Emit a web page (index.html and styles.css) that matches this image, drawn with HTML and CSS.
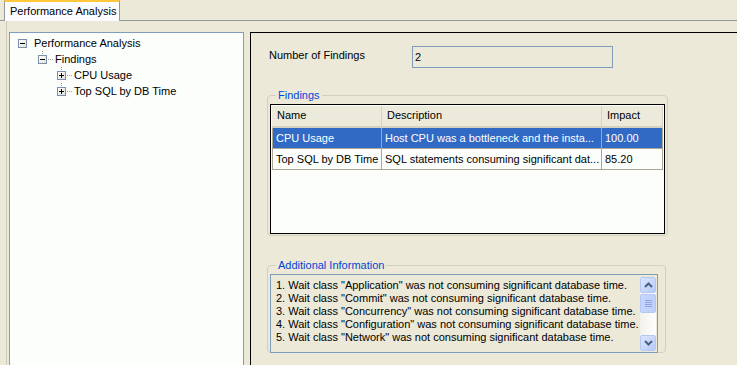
FILE: index.html
```html
<!DOCTYPE html>
<html>
	<head>
		<title>Performance Analysis</title>
		<meta charset="utf-8">
		<link rel="stylesheet" href="styles.css">
	</head>
	<body>
		<div class="tabbar">
			<div class="tab">Performance Analysis</div>
		</div>
		<div class="page">
			<div class="tree">
				<div class="node lvl0"><span class="box minus"></span><span class="label">Performance Analysis</span></div>
				<div class="node lvl1"><span class="box minus"></span><span class="dots"></span><span class="label">Findings</span></div>
				<div class="node lvl2"><span class="box plus"></span><span class="dots"></span><span class="label">CPU Usage</span></div>
				<div class="node lvl2"><span class="box plus"></span><span class="dots"></span><span class="label">Top SQL by DB Time</span></div>
			</div>
			<div class="detail">
				<div class="count">
					<span class="count-label">Number of Findings</span>
					<span class="field">2</span>
				</div>
				<fieldset class="group findings">
					<legend>Findings</legend>
					<div class="grid">
						<div class="row head">
							<div class="cell c-name">Name</div>
							<div class="cell c-desc">Description</div>
							<div class="cell c-imp">Impact</div>
						</div>
						<div class="row selected">
							<div class="cell c-name">CPU Usage</div>
							<div class="cell c-desc">Host CPU was a bottleneck and the insta...</div>
							<div class="cell c-imp">100.00</div>
						</div>
						<div class="row">
							<div class="cell c-name">Top SQL by DB Time</div>
							<div class="cell c-desc">SQL statements consuming significant dat...</div>
							<div class="cell c-imp">85.20</div>
						</div>
					</div>
				</fieldset>
				<fieldset class="group info">
					<legend>Additional Information</legend>
					<div class="textarea">
						<div class="lines">
							<p>1. Wait class "Application" was not consuming significant database time.</p>
							<p>2. Wait class "Commit" was not consuming significant database time.</p>
							<p>3. Wait class "Concurrency" was not consuming significant database time.</p>
							<p>4. Wait class "Configuration" was not consuming significant database time.</p>
							<p>5. Wait class "Network" was not consuming significant database time.</p>
						</div>
						<div class="scrollbar">
							<div class="sbtn"><svg width="9" height="6" viewBox="0 0 9 6"><path d="M1 5 L4.5 1.5 L8 5" fill="none" stroke="#4d6185" stroke-width="2"/></svg></div>
							<div class="thumb"><span></span><span></span><span></span><span></span></div>
							<div class="track"></div>
							<div class="sbtn"><svg width="9" height="6" viewBox="0 0 9 6"><path d="M1 1 L4.5 4.5 L8 1" fill="none" stroke="#4d6185" stroke-width="2"/></svg></div>
						</div>
					</div>
				</fieldset>
			</div>
		</div>
	</body>
</html>
```

FILE: styles.css
```css
*{
	margin:0;
	padding:0;
	box-sizing:border-box;
}
body{
	background-color:#ece9d8;
	font-family:"Liberation Sans", Arial, sans-serif;
	font-size:11px;
	color:#000;
	overflow:hidden;
	height:365px;
}
.tabbar{
	height:21px;
	border-bottom:1px solid #919b9c;
	padding-left:4px;
	display:flex;
}
.tab{
	width:116px;
	height:21px;
	background-color:#fcfcfe;
	border:1px solid #919b9c;
	border-top:2px solid #ffc83c;
	border-bottom:none;
	padding:3px 0 0 5px;
	line-height:13px;
	white-space:nowrap;
}
.page{
	margin-left:6px;
	border-left:1px solid #ccc9b8;
	display:flex;
	padding:11px 0 0 2px;
	gap:6px;
	height:344px;
}
.tree{
	width:235px;
	flex:none;
	background-color:#fcfefc;
	border:1px solid #7f9db9;
	border-bottom:none;
	padding-top:2px;
}
.node{
	height:16px;
	display:flex;
	align-items:center;
	position:relative;
}
.lvl0{padding-left:8px;}
.lvl1{padding-left:28px;}
.lvl2{padding-left:47px;}
.box{
	position:relative;
	width:9px;
	height:9px;
	border:1px solid #7a8fa8;
	background:linear-gradient(135deg,#ffffff 0%,#e2e2d8 100%);
	flex:none;
}
.box::after{
	content:"";
	position:absolute;
	left:1px;
	top:3px;
	width:5px;
	height:1px;
	background-color:#000;
}
.plus::before{
	content:"";
	position:absolute;
	left:3px;
	top:1px;
	width:1px;
	height:5px;
	background-color:#000;
}
.dots{
	width:6px;
	height:1px;
	margin-left:1px;
	margin-right:1px;
	background-image:linear-gradient(90deg,#a0a0a0 50%,transparent 50%);
	background-size:2px 1px;
	flex:none;
}
.lvl0 .label{margin-left:7px;}
.label{
	white-space:nowrap;
}
/* vertical dotted connectors above child expanders */
.lvl1::before, .lvl2::before{
	content:"";
	position:absolute;
	top:0;
	width:1px;
	height:4px;
	background-image:linear-gradient(180deg,#a0a0a0 50%,transparent 50%);
	background-size:1px 2px;
}
.lvl1::before{left:32px;}
.lvl2::before{left:51px;}
.detail{
	flex:1;
	margin-right:-20px;
	border:1px solid #000;
	border-bottom:none;
	padding:13px 0 0 16px;
}
.count{
	display:flex;
	align-items:center;
	height:22px;
}
.count-label{
	width:145px;
	padding-left:2px;
	margin-top:-5px;
}
.field{
	width:201px;
	height:22px;
	border:1px solid #7f9db9;
	padding:4px 0 0 2px;
}
.group{
	width:399px;
	border:1px solid #d0d0bf;
	border-radius:4px;
	padding:0 2px 1px 2px;
}
.group legend{
	color:#0046d5;
	margin-left:6px;
	padding:0 2px;
	line-height:13px;
	font-size:11px;
}
.findings{
	margin-top:21px;
}
.grid{
	border:1px solid #000;
	height:130px;
	background-color:#fcfefc;
	padding:1px;
	margin-top:2px;
}
.row{
	display:flex;
	height:21px;
	border-bottom:1px solid #aca899;
	width:391px;
}
.row .cell{
	border-right:1px solid #aca899;
	padding:0 0 0 3px;
	line-height:20px;
	white-space:nowrap;
	overflow:hidden;
	text-overflow:clip;
}
.row .cell:first-child{border-left:1px solid #aca899;}
.c-name{width:110px;}
.c-desc{width:220px;}
.c-imp{width:61px;}
.head{
	height:22px;
	background-color:#ebeadb;
	border-bottom:2px solid #d6d2c2;
}
.head .cell{
	border-right:1px solid #d6d2c2;
	padding-left:5px;
	line-height:19px;
}
.row.head .cell:first-child{border-left:none;}
.selected{
	background-color:#316ac5;
	color:#fff;
}
.info{
	margin-top:23px;
	height:94px;
}
.textarea{
	display:flex;
	border:1px solid #7f9db9;
	height:79px;
	width:388px;
	margin-top:2px;
	padding:2px 1px 1px 5px;
}
.lines{
	flex:1;
	padding-top:2px;
}
.lines p{
	line-height:13px;
	white-space:nowrap;
}
.scrollbar{
	width:16px;
	display:flex;
	flex-direction:column;
	background:linear-gradient(90deg,#f3f1ec,#fefefb);
}
.sbtn{
	height:16px;
	border:1px solid #b4c8f6;
	border-radius:2px;
	background:linear-gradient(135deg,#dce6fd,#b6cafa);
	display:flex;
	align-items:center;
	justify-content:center;
}
.thumb{
	height:19px;
	margin-top:1px;
	border:1px solid #b4c8f6;
	border-radius:2px;
	background:linear-gradient(90deg,#c6d5fc,#bfd0fb);
	display:flex;
	flex-direction:column;
	align-items:center;
	justify-content:center;
	gap:1px;
}
.thumb span{
	width:7px;
	height:1px;
	background-color:#8da4e0;
}
.track{
	flex:1;
}
```
